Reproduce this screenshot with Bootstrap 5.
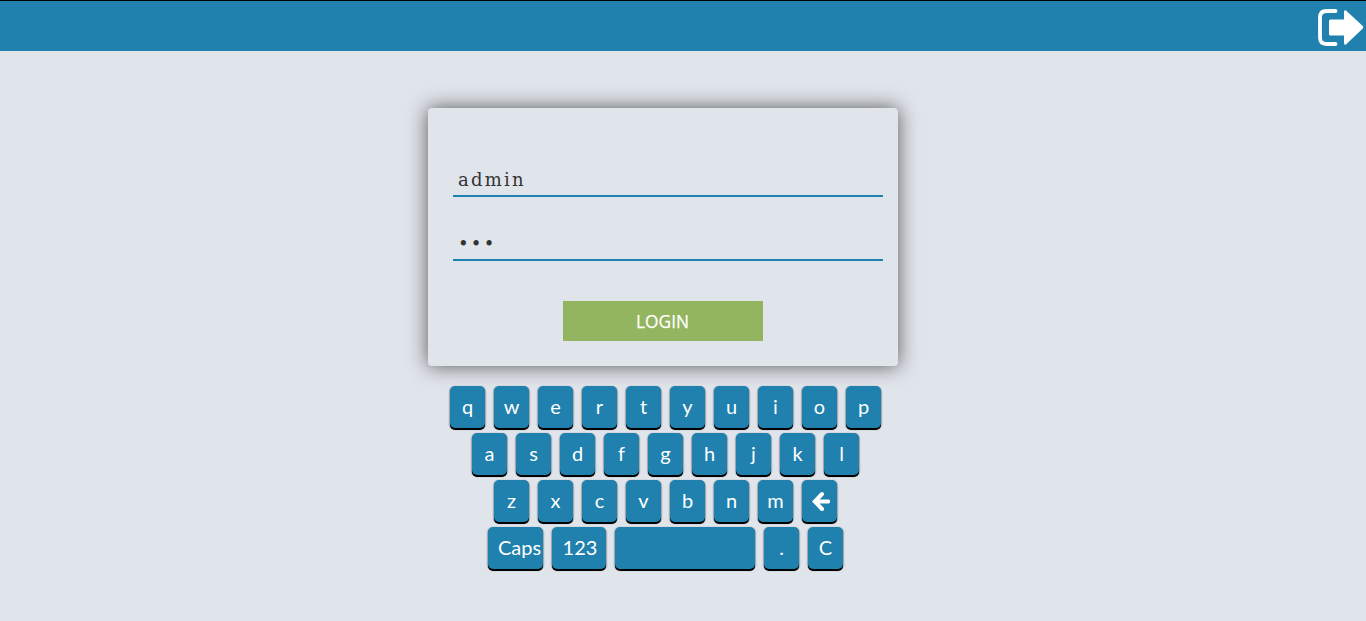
<!DOCTYPE html>
<html lang="en">
<head>
<meta charset="utf-8">
<title>Login</title>
<link href="https://cdn.jsdelivr.net/npm/bootstrap@5.3.0/dist/css/bootstrap.min.css" rel="stylesheet">
<style>
body{background:#e0e4eb;font-family:Lato,sans-serif;height:621px;overflow:hidden}
.topbar{height:51px;background:#2080ae;border-top:1px solid #000}
.stage{width:1326px}
.login-box{width:470px;height:258px;margin-top:57px;padding:53px 15px 0 25px;border-radius:4px;background:#e0e4eb;box-shadow:0 0 20px #555}
.field{height:36px;width:430px;border:0;border-bottom:2px solid #2080ae;border-radius:0;background:transparent;padding:2px 5px 0;font:18px/32px "DejaVu Serif",serif;letter-spacing:2.25px;color:#333;outline:0}
.field + .field{margin-top:28px}
.login-btn{width:200px;height:40px;margin:40px 0 0 110px;padding:0;border-radius:0;background:#94b55f;color:#fff;font:18px/38px "Open Sans",sans-serif}
.login-btn span{display:inline-block;transform:scaleX(.96);-webkit-text-stroke:.25px #fff}
.keys{margin:20px 0 0 5px;row-gap:5px}
.keyrow{gap:9px}
.key{width:35px;height:42px;padding:0 0 1px;border:0;border-radius:5px;background:#2080ae;color:#fff;font-size:20px;line-height:41px;text-align:center;box-shadow:0 2px 0 #000,0 1px 2px #000}
.key-wide{width:55px;padding-left:10px;text-align:left;white-space:nowrap}
.key-num{width:54px;padding-left:2px}
.key-space{width:140px}
</style>
</head>
<body>
<header class="topbar d-flex justify-content-end">
<svg width="48" height="50" viewBox="0 0 48 50"><path d="M17.500 10H8.500Q2 10 2 16.500V36.500Q2 43 8.500 43H17.500" fill="none" stroke="#fff" stroke-width="3.800" stroke-linecap="round"/><path d="M12.500 18.500H26V11Q26 8.500 28 9.500L44.800 25Q45.800 26.200 44.800 27.500L28 43.500Q26 44.500 26 42V34.500H12.500Q11 34.500 11 33V20Q11 18.500 12.500 18.500Z" fill="#fff"/></svg>
</header>
<main class="stage d-flex flex-column align-items-center">
<form class="login-box d-flex flex-column align-items-start">
<input class="field" type="text" value="admin" aria-label="User">
<input class="field" type="password" value="123" aria-label="Password">
<button class="btn login-btn" type="button"><span>LOGIN</span></button>
</form>
<div class="keys d-flex flex-column align-items-center">
<div class="keyrow d-flex"><button class="key">q</button><button class="key">w</button><button class="key">e</button><button class="key">r</button><button class="key">t</button><button class="key">y</button><button class="key">u</button><button class="key">i</button><button class="key">o</button><button class="key">p</button></div>
<div class="keyrow d-flex"><button class="key">a</button><button class="key">s</button><button class="key">d</button><button class="key">f</button><button class="key">g</button><button class="key">h</button><button class="key">j</button><button class="key">k</button><button class="key">l</button></div>
<div class="keyrow d-flex"><button class="key">z</button><button class="key">x</button><button class="key">c</button><button class="key">v</button><button class="key">b</button><button class="key">n</button><button class="key">m</button><button class="key d-flex align-items-center justify-content-center" aria-label="Backspace"><svg width="20" height="20" viewBox="0 0 20 20" fill="none" stroke="#fff" stroke-width="4"><path d="M12 3L4.800 10.500L12 18M5 10.500H18.200" stroke-linecap="round"/></svg></button></div>
<div class="keyrow d-flex"><button class="key key-wide">Caps</button><button class="key key-num">123</button><button class="key key-space" aria-label="Space"></button><button class="key">.</button><button class="key">C</button></div>
</div>
</main>
<script src="https://cdn.jsdelivr.net/npm/bootstrap@5.3.0/dist/js/bootstrap.bundle.min.js"></script>
</body>
</html>
